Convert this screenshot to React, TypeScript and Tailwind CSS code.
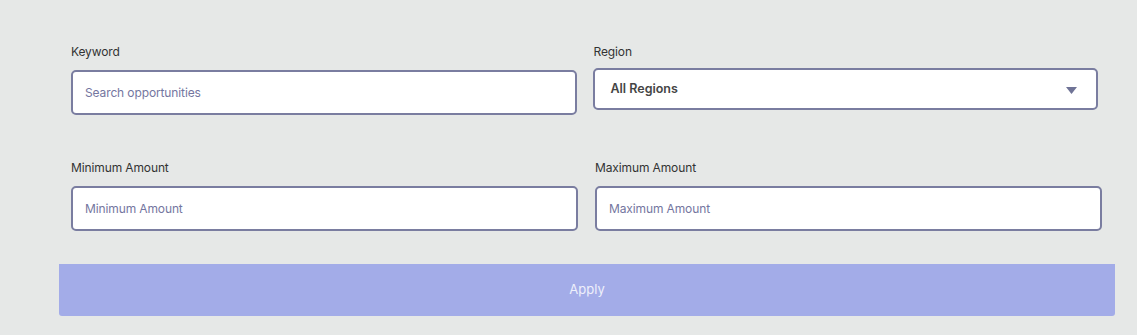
export default function App() {
  return (
    <div className="min-h-screen bg-[#e6e8e7] font-['Inter',sans-serif]">
      <div className="ml-[59px] w-[1056px] pt-[44px]">
        {/* first row */}
        <div className="grid grid-cols-2 gap-x-4 pl-3 pr-[17px]">
          <div>
            <label className="block text-[12px] leading-4 tracking-[-0.01em] text-[#333] mb-[10px]">Keyword</label>
            <input
              placeholder="Search opportunities"
              className="w-full h-[45px] rounded-[5px] border-2 border-[#7a7da0] bg-white px-3 text-[12px] tracking-[-0.01em] text-[#444] placeholder:text-[#7476a0] outline-none"
            />
          </div>
          <div>
            <label className="block pl-px text-[12px] leading-4 tracking-[-0.01em] text-[#333] mb-[8px]">Region</label>
            <div className="flex h-[42px] items-center justify-between rounded-[5px] border-2 border-[#7a7da0] bg-white pl-[16px] pr-[19px]">
              <span className="text-[12.5px] font-semibold text-[#454545]">All Regions</span>
              <svg width="11" height="7" viewBox="0 0 11 7" className="mt-[3px]">
                <path d="M0 0h11L5.5 7z" fill="#6f7396" />
              </svg>
            </div>
          </div>
        </div>

        {/* second row */}
        <div className="grid grid-cols-2 gap-x-[17px] pl-3 pr-[13px] mt-[45px]">
          <div>
            <label className="block text-[12px] leading-4 tracking-[-0.01em] text-[#333] mb-[10px]">Minimum Amount</label>
            <input
              placeholder="Minimum Amount"
              className="w-full h-[45px] rounded-[5px] border-2 border-[#7a7da0] bg-white px-3 text-[12px] tracking-[-0.01em] text-[#444] placeholder:text-[#7476a0] outline-none"
            />
          </div>
          <div>
            <label className="block text-[12px] leading-4 tracking-[-0.01em] text-[#333] mb-[10px]">Maximum Amount</label>
            <input
              placeholder="Maximum Amount"
              className="w-full h-[45px] rounded-[5px] border-2 border-[#7a7da0] bg-white px-3 text-[12px] tracking-[-0.01em] text-[#444] placeholder:text-[#7476a0] outline-none"
            />
          </div>
        </div>

        <button className="mt-[33px] flex h-[52px] w-full items-center justify-center rounded-b-[3px] bg-[#a3ace8] text-[13px] text-[#eef0fb]">
          Apply
        </button>
      </div>
    </div>
  );
}
